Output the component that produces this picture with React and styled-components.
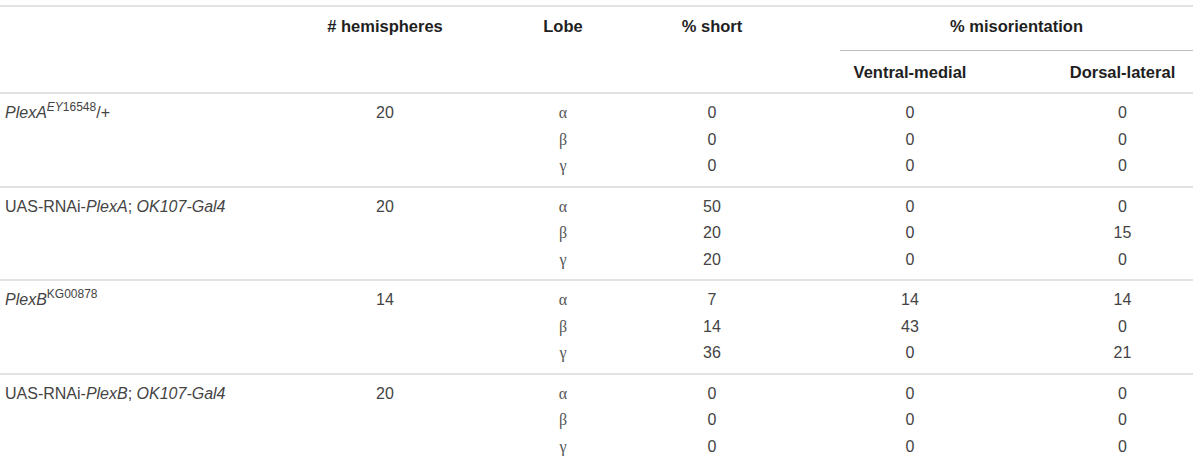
import React from "react";
import styled, { createGlobalStyle } from "styled-components";

const GlobalStyle = createGlobalStyle`
    html, body {
        margin: 0;
        padding: 0;
        background: #fff;
    }
    body {
        font-family: "Liberation Sans", Arial, sans-serif;
    }
`;

const Table = styled.table`
    width: 1193px;
    border-collapse: collapse;
    margin-top: 5px;
    font-size: 16px;
    color: #444;
    border-top: 2px solid #e2e2e2;
`;

const HeadCell = styled.th`
    font-weight: bold;
    font-size: 16.5px;
    color: #1f1f1f;
    text-align: ${(p) => (p.$left ? "left" : "center")};
    vertical-align: top;
    padding: ${(p) => (p.$sub ? "12px 0 10px" : "10px 0 0")};
    height: ${(p) => (p.$sub ? "auto" : "20px")};
    border-bottom: ${(p) => (p.$last ? "2px solid #e2e2e2" : "none")};
`;

const SpanTitle = styled.div`
    margin-left: ${(p) => p.$offset}px;
    padding-bottom: 14px;
    border-bottom: 1px solid #bdbdbd;
`;

const Row = styled.tr`
    border-top: ${(p) => (p.$first ? "2px solid #e2e2e2" : "none")};
`;

const Cell = styled.td`
    height: 26.5px;
    padding: 0;
    padding-top: ${(p) => (p.$first ? "6px" : "0")};
    padding-bottom: ${(p) => (p.$last ? "6px" : "0")};
    vertical-align: middle;
    text-align: ${(p) => (p.$left ? "left" : "center")};
`;

const Genotype = styled.span`
    padding-left: 5px;
    white-space: nowrap;
    i {
        font-style: italic;
    }
    sup {
        font-size: 12px;
        vertical-align: 7px;
        line-height: 0;
    }
`;

const Greek = styled.span`
    font-family: "Liberation Serif", "Times New Roman", serif;
    font-size: 16px;
    color: #555;
`;

const groups = [
    {
        name: (
            <>
                <i>PlexA</i>
                <sup>
                    <i>EY</i>16548
                </sup>
                /+
            </>
        ),
        n: 20,
        rows: [
            ["0", "0", "0"],
            ["0", "0", "0"],
            ["0", "0", "0"],
        ],
    },
    {
        name: (
            <>
                UAS-RNAi-<i>PlexA</i>; <i>OK107-Gal4</i>
            </>
        ),
        n: 20,
        rows: [
            ["50", "0", "0"],
            ["20", "0", "15"],
            ["20", "0", "0"],
        ],
    },
    {
        name: (
            <>
                <i>PlexB</i>
                <sup>KG00878</sup>
            </>
        ),
        n: 14,
        rows: [
            ["7", "14", "14"],
            ["14", "43", "0"],
            ["36", "0", "21"],
        ],
    },
    {
        name: (
            <>
                UAS-RNAi-<i>PlexB</i>; <i>OK107-Gal4</i>
            </>
        ),
        n: 20,
        rows: [
            ["0", "0", "0"],
            ["0", "0", "0"],
            ["0", "0", "0"],
        ],
    },
];

const lobes = ["α", "β", "γ"];

const App = () => {
    return (
        <>
            <GlobalStyle />
            <Table>
                <colgroup>
                    <col style={{ width: 300 }} />
                    <col style={{ width: 170 }} />
                    <col style={{ width: 186 }} />
                    <col style={{ width: 112 }} />
                    <col style={{ width: 284 }} />
                    <col style={{ width: 141 }} />
                </colgroup>
                <thead>
                    <tr>
                        <HeadCell $left />
                        <HeadCell># hemispheres</HeadCell>
                        <HeadCell>Lobe</HeadCell>
                        <HeadCell>% short</HeadCell>
                        <HeadCell colSpan={2}>
                            <SpanTitle $offset={72}>% misorientation</SpanTitle>
                        </HeadCell>
                    </tr>
                    <tr>
                        <HeadCell $sub $last />
                        <HeadCell $sub $last />
                        <HeadCell $sub $last />
                        <HeadCell $sub $last />
                        <HeadCell $sub $last>
                            Ventral-medial
                        </HeadCell>
                        <HeadCell $sub $last>
                            Dorsal-lateral
                        </HeadCell>
                    </tr>
                </thead>
                <tbody>
                    {groups.map((g, gi) =>
                        g.rows.map((r, ri) => (
                            <Row key={`${gi}-${ri}`} $first={ri === 0}>
                                <Cell $left $first={ri === 0} $last={ri === 2}>
                                    {ri === 0 && <Genotype>{g.name}</Genotype>}
                                </Cell>
                                <Cell $first={ri === 0} $last={ri === 2}>
                                    {ri === 0 ? g.n : ""}
                                </Cell>
                                <Cell $first={ri === 0} $last={ri === 2}>
                                    <Greek>{lobes[ri]}</Greek>
                                </Cell>
                                {r.map((v, vi) => (
                                    <Cell
                                        key={vi}
                                        $first={ri === 0}
                                        $last={ri === 2}
                                    >
                                        {v}
                                    </Cell>
                                ))}
                            </Row>
                        ))
                    )}
                </tbody>
            </Table>
        </>
    );
};

export default App;
